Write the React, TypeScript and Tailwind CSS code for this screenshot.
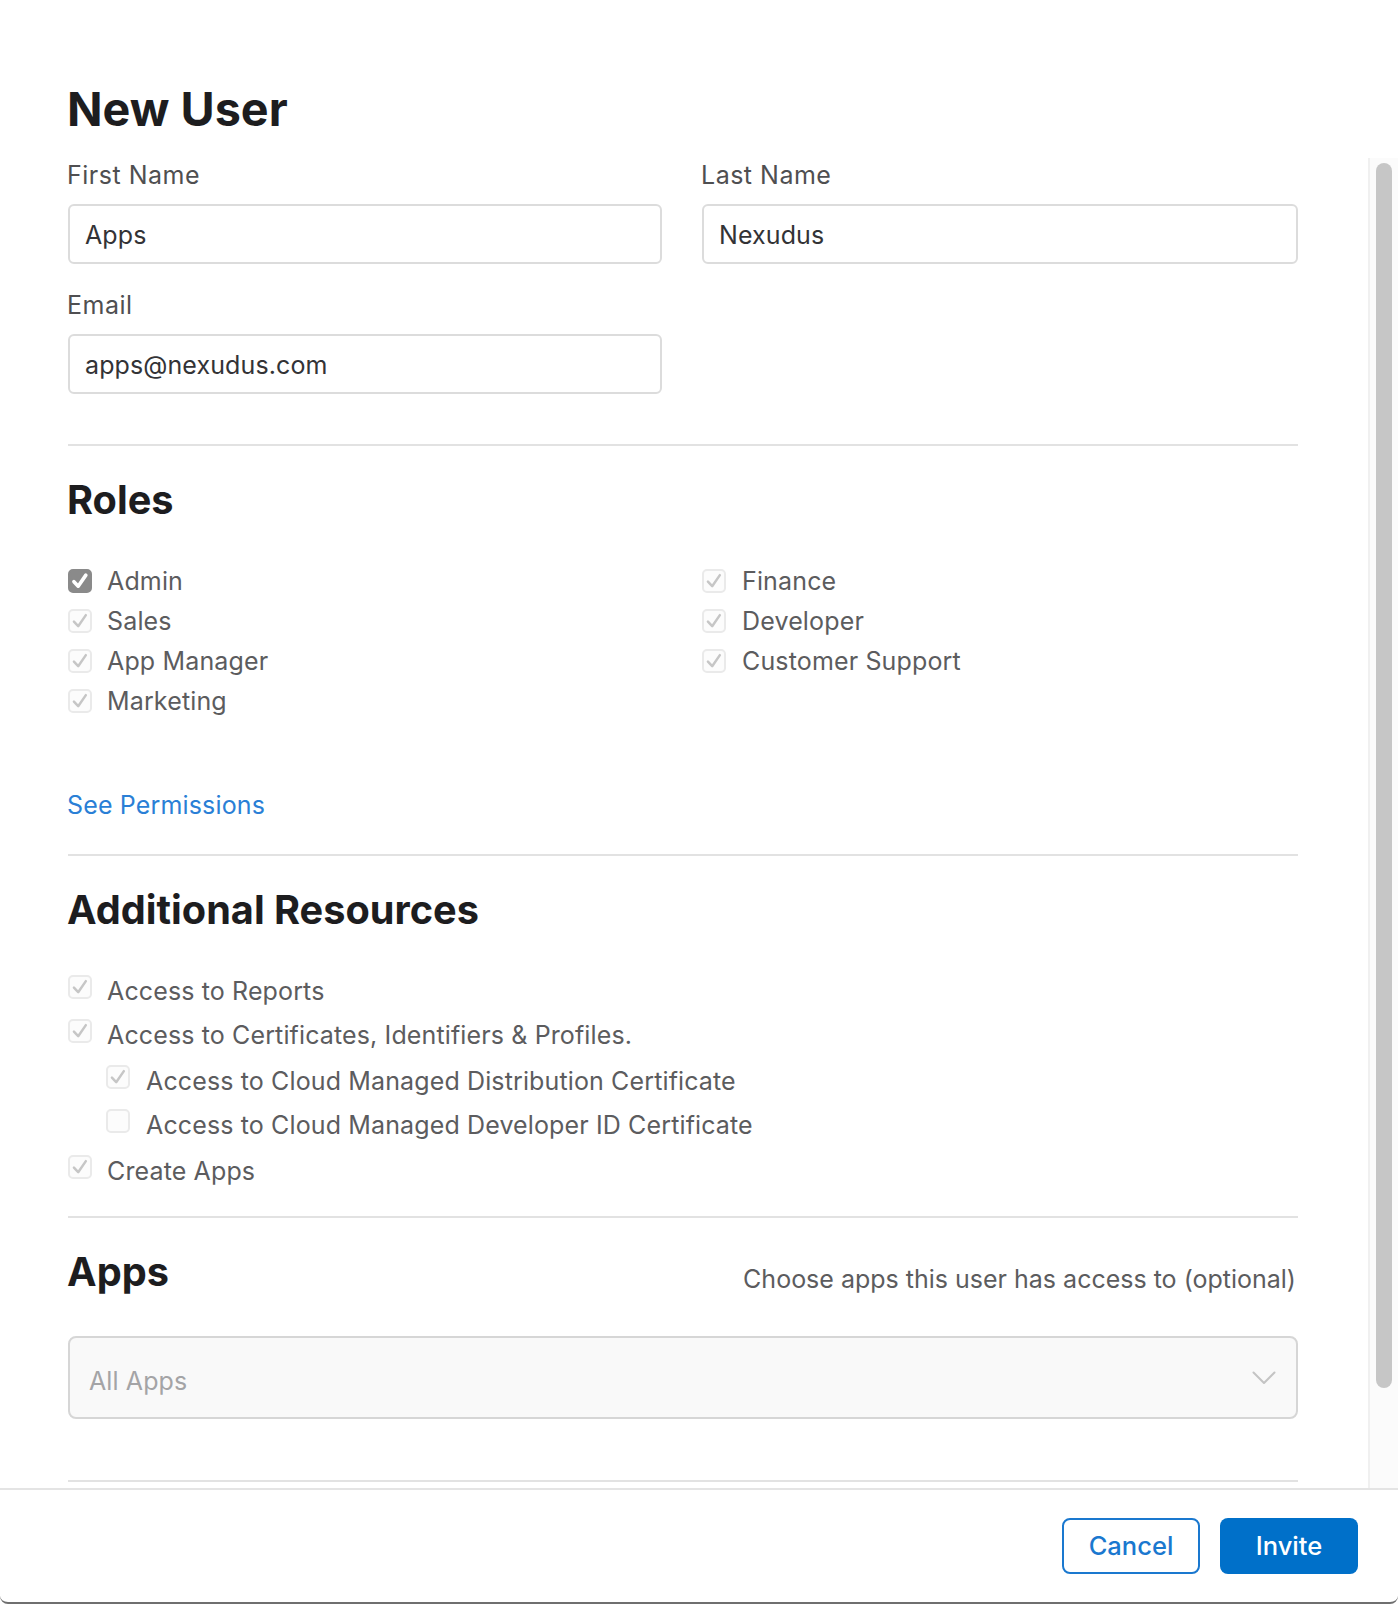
import React from "react";

function Box({ checked = true, strong = false, cls = "" }: { checked?: boolean; strong?: boolean; cls?: string }) {
  return (
    <span className={`flex h-[24px] w-[24px] shrink-0 items-center justify-center rounded-[5px] border-2 ${strong ? "border-[#8a8a8a] bg-[#8a8a8a]" : "border-[#eaeaea] bg-[#fcfcfc]"} ${cls}`}>
      {checked && (
        <svg viewBox="0 0 16 16" className="h-[18px] w-[18px]" fill="none">
          <path d="M2.6 8.6 L6.4 12.6 L13.2 2.8" stroke={strong ? "#ffffff" : "#c6c6c6"} strokeWidth={strong ? 3.2 : 2.2} strokeLinecap="round" strokeLinejoin="round" />
        </svg>
      )}
    </span>
  );
}

function Role({ label, strong = false, wide = false }: { label: string; strong?: boolean; wide?: boolean }) {
  return (
    <div className={`flex h-[40px] items-center ${wide ? "gap-[16px]" : "gap-[15px]"}`}>
      <Box strong={strong} />
      <span className="text-[25px] leading-[34px] tracking-[0.15px] text-[#5c5c5e]">{label}</span>
    </div>
  );
}

function Res({ label, checked = true, nested = false, cls = "" }: { label: string; checked?: boolean; nested?: boolean; cls?: string }) {
  return (
    <div className={`flex h-[34px] items-start ${nested ? "gap-[16px] pl-[38px]" : "gap-[15px]"} ${cls}`}>
      <Box checked={checked} cls="mt-[1px]" />
      <span className="text-[25px] leading-[34px] tracking-[0.13px] text-[#5c5c5e]">{label}</span>
    </div>
  );
}

function Field({ label, value, cls = "" }: { label: string; value: string; cls?: string }) {
  return (
    <label className={`block ${cls}`}>
      <span className="-ml-px block h-[34px] text-[25px] leading-[34px] tracking-[0.5px] text-[#4f4f51]">{label}</span>
      <input
        readOnly
        value={value}
        className="mt-[12px] block h-[60px] w-full rounded-[6px] border-2 border-[#dcdcdc] bg-white px-[15px] pt-[2px] text-[25px] tracking-[0.1px] text-[#333336] outline-none"
      />
    </label>
  );
}

export default function App() {
  return (
    <div className="flex h-[1604px] w-[1398px] flex-col overflow-hidden rounded-[8px] border-b-2 border-[#6f6f6f] bg-white font-['Inter','Liberation_Sans',sans-serif]">
      <div className="h-[158px] shrink-0 pl-[67px] pt-[81px]">
        <h1 className="text-[46.7px] font-bold leading-[56px] text-[#1d1d1f]">New User</h1>
      </div>
      <div className="flex h-[1330px] shrink-0 overflow-hidden">
        <div className="w-[1368px] shrink-0 overflow-hidden pl-[68px] pr-[70px]">
          <div className="grid grid-cols-[594px_596px] gap-x-[40px]">
            <Field label="First Name" value="Apps" />
            <Field label="Last Name" value="Nexudus" />
            <Field label="Email" value="apps@nexudus.com" cls="mt-[24px]" />
          </div>
          <div className="mt-[50px] h-[2px] bg-[#e2e2e2]" />

          <h2 className="-ml-px mt-[32px] text-[39.7px] font-bold leading-[44px] text-[#1d1d1f]">Roles</h2>
          <div className="mt-[39px] grid grid-cols-[634px_596px]">
            <div>
              <Role label="Admin" strong />
              <Role label="Sales" />
              <Role label="App Manager" />
              <Role label="Marketing" />
            </div>
            <div>
              <Role label="Finance" wide />
              <Role label="Developer" wide />
              <Role label="Customer Support" wide />
            </div>
          </div>
          <a className="-ml-px mt-[67px] block text-[25px] leading-[34px] tracking-[0.15px] text-[#2a7fd6]">See Permissions</a>
          <div className="mt-[32px] h-[2px] bg-[#e2e2e2]" />

          <h2 className="-ml-px mt-[32px] text-[39.7px] font-bold leading-[44px] text-[#1d1d1f]">Additional Resources</h2>
          <Res label="Access to Reports" cls="mt-[42px]" />
          <Res label="Access to Certificates, Identifiers & Profiles." cls="mt-[10px]" />
          <Res label="Access to Cloud Managed Distribution Certificate" nested cls="mt-[12px]" />
          <Res label="Access to Cloud Managed Developer ID Certificate" nested checked={false} cls="mt-[10px]" />
          <Res label="Create Apps" cls="mt-[12px]" />
          <div className="mt-[28px] h-[2px] bg-[#e2e2e2]" />

          <div className="mt-[32px] flex items-start justify-between">
            <h2 className="-ml-px text-[39.7px] font-bold leading-[44px] text-[#1d1d1f]">Apps</h2>
            <span className="mt-[12px] pr-[2px] text-[25px] leading-[34px] text-[#5c5c5e]">Choose apps this user has access to (optional)</span>
          </div>
          <div className="mt-[40px] flex h-[83px] items-center justify-between rounded-[8px] border-2 border-[#d6d6d6] bg-[#f9f9f9] pl-[19px] pr-[20px]">
            <span className="mt-[9px] text-[25px] tracking-[0.1px] text-[#a4a4a6]">All Apps</span>
            <svg viewBox="0 0 24 14" className="h-[14px] w-[24px]" fill="none">
              <path d="M1.5 1.5 L12 12 L22.5 1.5" stroke="#c4c4c4" strokeWidth="2" strokeLinecap="round" strokeLinejoin="round" />
            </svg>
          </div>
          <div className="mt-[61px] h-[2px] bg-[#e2e2e2]" />
        </div>
        <div className="flex flex-1 justify-center border-l-2 border-[#f0f0f0] bg-[#fbfbfb] pt-[5px]">
          <div className="h-[1225px] w-[16px] rounded-full bg-[#c6c6c6]" />
        </div>
      </div>
      <div className="flex flex-1 items-start justify-end gap-[20px] border-t-2 border-[#e4e4e4] pr-[40px] pt-[28px]">
        <button className="h-[56px] w-[138px] rounded-[8px] border-2 border-[#1a78cf] bg-white text-[25.5px] font-medium text-[#1a78cf]">Cancel</button>
        <button className="h-[56px] w-[138px] rounded-[8px] bg-[#0070c9] text-[25.5px] font-medium text-white">Invite</button>
      </div>
    </div>
  );
}
